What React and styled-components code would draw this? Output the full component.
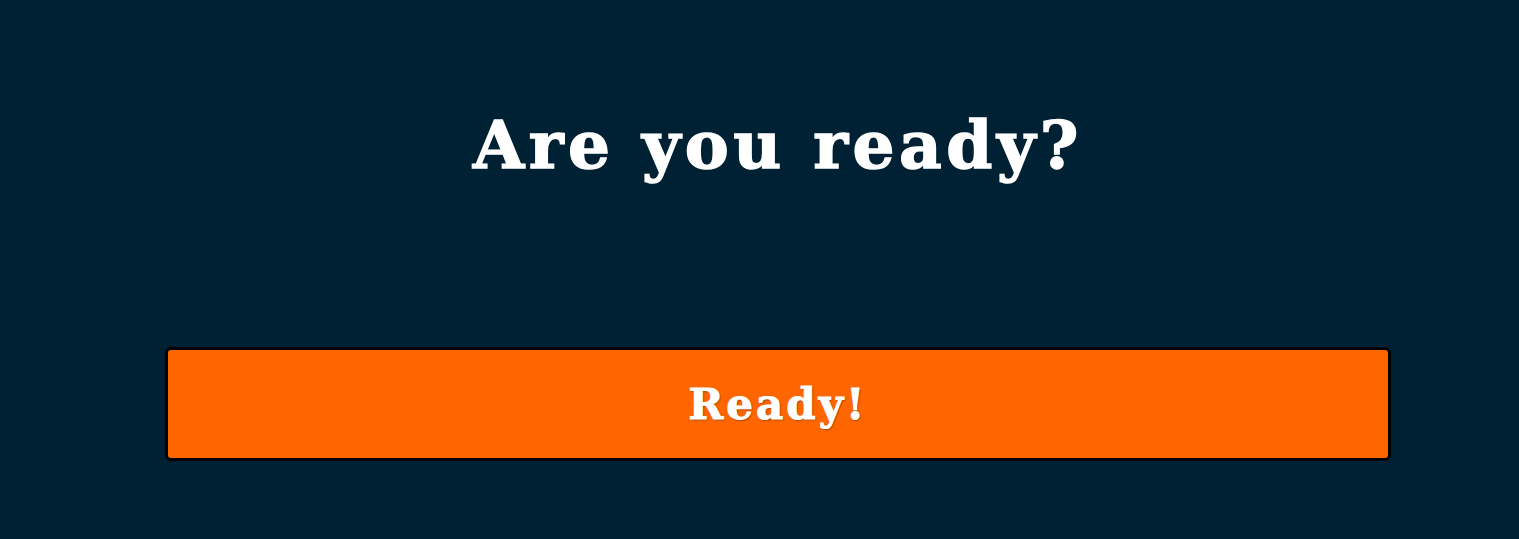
import React from 'react';
import styled, { createGlobalStyle } from 'styled-components';

const GlobalStyle = createGlobalStyle`
  html, body {
    margin: 0;
    padding: 0;
    background: #002033;
  }
  body {
    font-family: "DejaVu Serif", "Liberation Serif", serif;
  }
`;

export default function App() {
  return (
    <Page>
      <GlobalStyle />
      <Title>Are you ready?</Title>
      <ReadyButton type="button">Ready!</ReadyButton>
    </Page>
  );
}

const Page = styled.main`
  display: flex;
  flex-direction: column;
  align-items: stretch;
  min-height: 539px;
  box-sizing: border-box;
  padding: 97px 128px 0 165px;
`;

const Title = styled.h1`
  margin: 0;
  text-align: center;
  color: white;
  font-family: "DejaVu Serif", serif;
  font-weight: 900;
  font-size: 66px;
  line-height: 96px;
  letter-spacing: 4.5px;
  -webkit-text-stroke: 1.5px white;
`;

const ReadyButton = styled.button`
  margin-top: 154px;
  height: 114px;
  background: #ff6600;
  border: 3px solid #000;
  border-radius: 6px;
  color: white;
  font-family: "DejaVu Serif", serif;
  font-weight: bold;
  font-size: 42px;
  letter-spacing: 3px;
  -webkit-text-stroke: 1px white;
  text-shadow: 1px 1px 2px rgba(0, 0, 0, 0.45);
  cursor: pointer;
`;
